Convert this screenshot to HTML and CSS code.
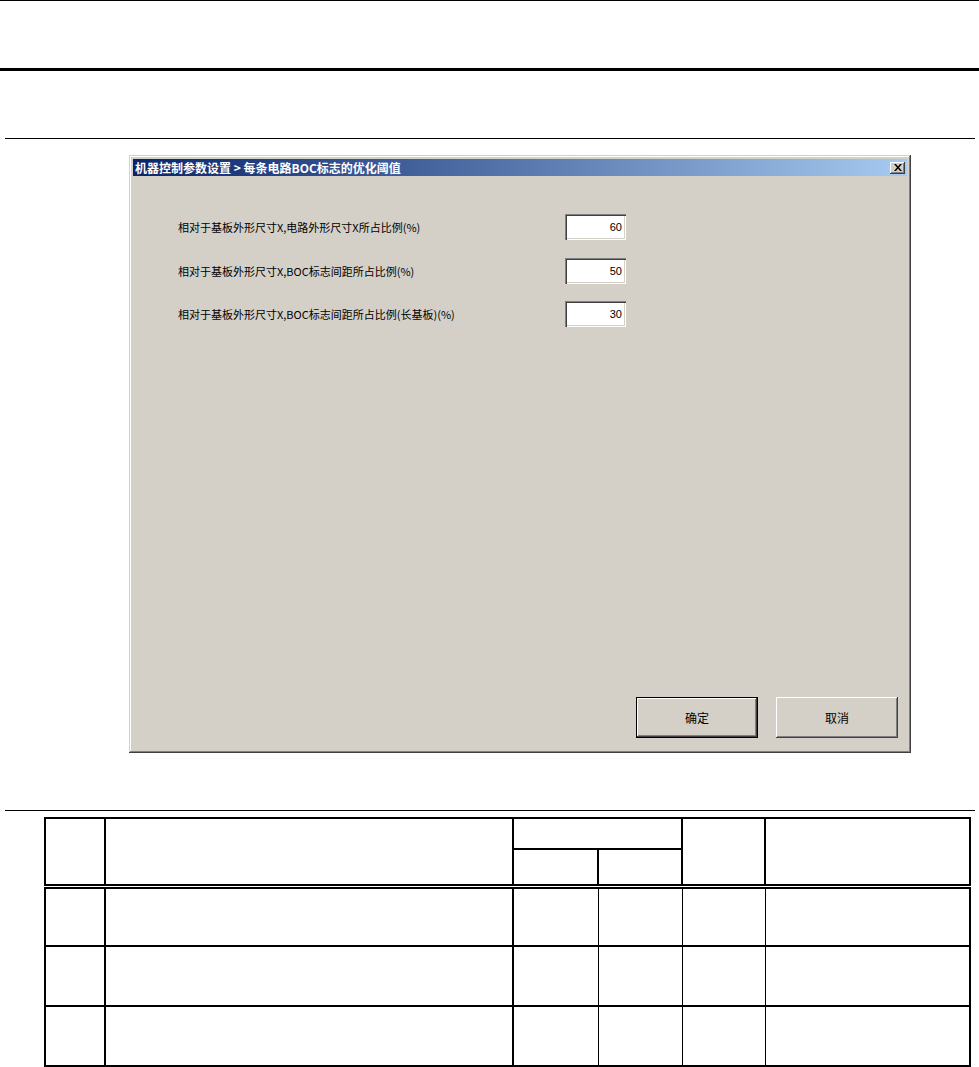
FILE: index.html
```html
<!DOCTYPE html>
<html lang="zh-CN">
<head>
    <meta charset="UTF-8">
    <title>机器控制参数设置</title>
    <link rel="stylesheet" href="styles.css">
</head>
<body>
    <div class="page">
        <div class="rule rule-top"></div>
        <div class="rule rule-thick"></div>
        <div class="rule rule-thin"></div>

        <div class="dialog">
            <div class="titlebar">
                <span class="title">机器控制参数设置 &gt; 每条电路BOC标志的优化阈值</span>
                <button class="close" type="button">
                    <svg width="8" height="7" viewBox="0 0 8 7">
                        <path d="M0 0h2l2 2.5L6 0h2L5 3.5 8 7H6L4 4.5 2 7H0l3-3.5z" fill="#000"/>
                    </svg>
                </button>
            </div>
            <div class="dialog-body">
                <div class="fields">
                    <div class="field">
                        <label>相对于基板外形尺寸X,电路外形尺寸X所占比例(%)</label>
                        <input class="num" type="text" value="60">
                    </div>
                    <div class="field">
                        <label>相对于基板外形尺寸X,BOC标志间距所占比例(%)</label>
                        <input class="num" type="text" value="50">
                    </div>
                    <div class="field">
                        <label>相对于基板外形尺寸X,BOC标志间距所占比例(长基板)(%)</label>
                        <input class="num" type="text" value="30">
                    </div>
                </div>
                <div class="actions">
                    <button class="btn btn-default" type="button">确定</button>
                    <button class="btn" type="button">取消</button>
                </div>
            </div>
        </div>

        <div class="rule rule-section"></div>

        <table class="spec">
            <colgroup>
                <col style="width:60px">
                <col style="width:408px">
                <col style="width:85px">
                <col style="width:84px">
                <col style="width:83px">
                <col style="width:205px">
            </colgroup>
            <thead>
                <tr class="h1">
                    <th rowspan="2"></th>
                    <th rowspan="2"></th>
                    <th colspan="2"></th>
                    <th rowspan="2"></th>
                    <th rowspan="2"></th>
                </tr>
                <tr class="h2">
                    <th></th>
                    <th></th>
                </tr>
            </thead>
            <tbody>
                <tr><td></td><td></td><td></td><td></td><td></td><td></td></tr>
                <tr><td></td><td></td><td></td><td></td><td></td><td></td></tr>
                <tr><td></td><td></td><td></td><td></td><td></td><td></td></tr>
            </tbody>
        </table>
    </div>
</body>
</html>
```

FILE: styles.css
```css
* {
    box-sizing: border-box;
}

body {
    margin: 0;
    background: #ffffff;
    color: #000000;
    font-family: "Noto Sans CJK SC", "Liberation Sans", sans-serif;
    overflow: hidden;
}

.page {
    width: 979px;
}

.rule {
    background: #000000;
}

.rule-top {
    height: 1px;
}

.rule-thick {
    margin-top: 67px;
    height: 3px;
}

.rule-thin {
    margin: 67px 4px 0 5px;
    height: 1px;
}

/* classic windows dialog */
.dialog {
    margin: 16px 0 0 129px;
    width: 782px;
    height: 598px;
    padding: 4px;
    background: #d4d0c8;
    display: flex;
    flex-direction: column;
    box-shadow:
        inset -1px -1px #404040,
        inset 1px 1px #d4d0c8,
        inset -2px -2px #808080,
        inset 2px 2px #ffffff;
}

.titlebar {
    height: 17px;
    display: flex;
    align-items: center;
    justify-content: space-between;
    padding: 0 2px 0 2px;
    background: linear-gradient(to right, #0a246a, #a6caf0);
}

.title {
    color: #ffffff;
    font-size: 12px;
    font-weight: bold;
    line-height: 17px;
    white-space: nowrap;
}

.close {
    width: 15px;
    height: 12px;
    padding: 0;
    border: none;
    background: #d4d0c8;
    display: flex;
    align-items: center;
    justify-content: center;
    box-shadow:
        inset -1px -1px #404040,
        inset 1px 1px #ffffff,
        inset -2px -2px #808080;
}

.dialog-body {
    flex: 1;
    display: flex;
    flex-direction: column;
    padding: 38px 9px 11px 45px;
}

.fields {
    display: flex;
    flex-direction: column;
    gap: 17.5px;
}

.field {
    display: flex;
    align-items: center;
}

.field label {
    width: 387px;
    font-size: 11px;
    white-space: nowrap;
}

.num {
    width: 61px;
    height: 26px;
    padding: 0 4px 0 0;
    border: none;
    background: #ffffff;
    font-family: "Liberation Sans", sans-serif;
    font-size: 11px;
    text-align: right;
    box-shadow:
        inset 1px 1px #808080,
        inset 2px 2px #404040,
        inset -1px -1px #ffffff,
        inset -2px -2px #d4d0c8;
}

.actions {
    margin-top: auto;
    display: flex;
    justify-content: flex-end;
    gap: 18px;
}

.btn {
    width: 122px;
    height: 41px;
    padding: 0;
    border: none;
    background: #d4d0c8;
    color: #000000;
    font-family: "Noto Sans CJK SC", sans-serif;
    font-size: 12px;
    box-shadow:
        inset -1px -1px #404040,
        inset 1px 1px #ffffff,
        inset -2px -2px #808080;
}

.btn-default {
    box-shadow:
        inset 0 0 0 1px #000000,
        inset -2px -2px #404040,
        inset 2px 2px #ffffff,
        inset -3px -3px #808080;
}

.rule-section {
    margin: 57px 4px 0 5px;
    height: 1px;
}

/* empty spec table */
.spec {
    margin: 6px 0 0 44px;
    width: 925px;
    table-layout: fixed;
    border-collapse: collapse;
    border: 2px solid #000000;
}

.spec th,
.spec td {
    border: 2px solid #000000;
    padding: 0;
}

.spec .h1 {
    height: 31px;
}

.spec .h2 {
    height: 37px;
}

.spec .h2 th {
    border-bottom: 5px double #000000;
}

.spec thead .h1 th[rowspan] {
    border-bottom: 5px double #000000;
}

.spec tbody tr {
    height: 60px;
}

.spec tbody td:nth-child(3),
.spec tbody td:nth-child(4),
.spec tbody td:nth-child(5) {
    border-right-width: 1px;
}

.spec tbody td:nth-child(4),
.spec tbody td:nth-child(5),
.spec tbody td:nth-child(6) {
    border-left-width: 1px;
}
```
